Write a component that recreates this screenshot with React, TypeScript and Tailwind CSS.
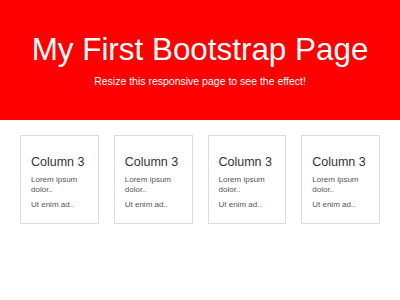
import React from 'react';

const columns = [1, 2, 3, 4];

const App: React.FC = () => {
  return (
    <div className="w-[400px] h-[300px] bg-white font-['Liberation_Sans',Arial,sans-serif] overflow-hidden">
      {/* Jumbotron */}
      <div className="h-[120px] bg-[#ff0000] text-white flex flex-col items-center pt-[32px]">
        <h1 className="text-[31.4px] leading-[36px]">My First Bootstrap Page</h1>
        <p className="text-[10.5px] leading-[14px] mt-[6px]">Resize this responsive page to see the effect!</p>
      </div>

      {/* Columns */}
      <div className="grid grid-cols-4 gap-[15px] px-5 pt-[15px]">
        {columns.map((c) => (
          <div key={c} className="h-[89px] border border-[#dddddd] px-[10px] pt-[19px] text-[#333333]">
            <h3 className="text-[12.5px] leading-[14px]">Column 3</h3>
            <p className="text-[8px] leading-[10px] mt-[6px] text-[#555555] w-[52px]">Lorem ipsum dolor..</p>
            <p className="text-[8px] leading-[10px] mt-[5px] text-[#555555]">Ut enim ad..</p>
          </div>
        ))}
      </div>
    </div>
  );
};

export default App;
